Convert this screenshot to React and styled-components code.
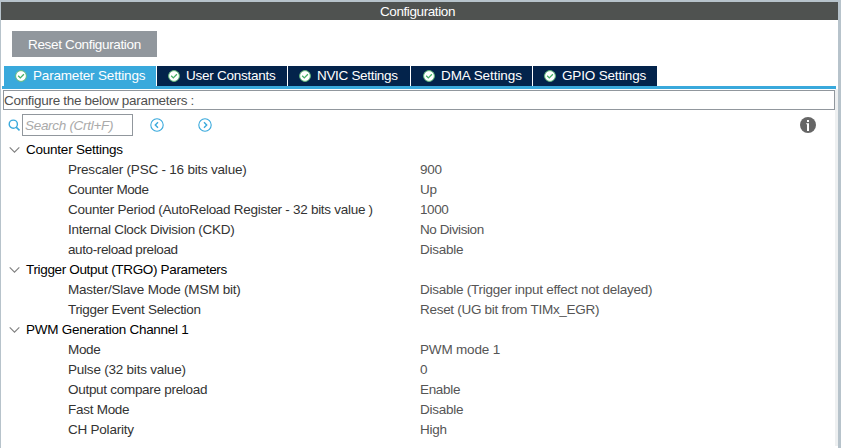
import React from "react";
import styled, { createGlobalStyle } from "styled-components";

const GlobalStyle = createGlobalStyle`
  *, *::before, *::after { box-sizing: border-box; }
  body { margin: 0; background: #fff; overflow: hidden; }
`;

const Window = styled.div`
  width: 841px;
  height: 448px;
  border: solid #b7c3cb;
  border-width: 2px 3px 0 1px;
  background: #fff;
  font: 13.5px/20px "Liberation Sans", Arial, sans-serif;
  color: #505050;
  white-space: pre;
`;

const Text = styled.span`
  letter-spacing: ${({ $ls }) => $ls || 0}px;
`;

const TitleBar = styled.header`
  height: 18px;
  line-height: 19px;
  background: #4f5250;
  color: #fff;
  text-align: center;
  padding-right: 4px;
`;

const Toolbar = styled.div`
  height: 46px;
  padding: 11px 0 0 11px;
`;

const ResetButton = styled.button`
  display: block;
  width: 145px;
  height: 26px;
  border: 0;
  padding: 1px 0 0 16px;
  background: #91979d;
  color: #fff;
  font: inherit;
  text-align: left;
  white-space: pre;
`;

const Tabs = styled.nav`
  display: flex;
  gap: 1px;
  height: 20px;
  padding-left: 3px;
`;

const Tab = styled.div`
  display: flex;
  align-items: center;
  gap: 6px;
  width: ${({ $width }) => $width}px;
  padding-left: ${({ $inset }) => $inset || 11}px;
  background: ${({ $active }) => ($active ? "#39a9dc" : "#03234b")};
  color: #fff;
`;

const TabLine = styled.div`
  height: 3px;
  width: 834px;
  margin-left: 1px;
  background: #39a9dc;
`;

const Content = styled.main`
  width: 836px;
  height: 357px;
  margin-left: 1px;
  padding: 1px 0 0 1px;
  border-right: 3px solid #eef0f1;
`;

const Description = styled.div`
  width: 832px;
  height: 20px;
  border: 1px solid #91979d;
  line-height: 19px;
`;

const SearchRow = styled.div`
  display: flex;
  align-items: center;
  height: 30px;
  padding-left: 5px;
`;

const SearchBox = styled.div`
  width: 111px;
  height: 22px;
  margin: 0 17px 0 2px;
  padding-left: 2px;
  border: 1px solid #91979d;
  color: #aaa;
  font-style: italic;
  line-height: 21px;
`;

const NavButton = styled.span`
  display: flex;
  width: 14px;
  height: 14px;
  margin-right: 34px;
`;

const InfoButton = styled.span`
  display: flex;
  margin: 0 19px 0 auto;
`;

const Group = styled.section`
  display: block;
`;

const GroupTitle = styled.h2`
  display: flex;
  align-items: center;
  gap: 6px;
  height: 20px;
  margin: 0;
  padding-left: 6px;
  font: inherit;
  color: #000;
`;

const Row = styled.div`
  display: grid;
  grid-template-columns: 352px 1fr;
  height: 20px;
  padding-left: 65px;
`;

const Name = styled(Text)`
  color: #333;
`;

const Value = styled(Text)`
  color: #555;
`;

const CheckIcon = () => (
  <svg width="12" height="12" viewBox="0 0 12 12">
    <circle cx="6" cy="6" r="5.4" fill="#fff" stroke="#61bb7b" strokeWidth="1" />
    <path d="M3.2 5.8 5.3 7.9 8.9 4.3" fill="none" stroke="#45b065" strokeWidth="1.3" />
  </svg>
);

const SearchIcon = () => (
  <svg width="12" height="12" viewBox="0 0 12 12">
    <circle cx="5.3" cy="5.2" r="4.1" fill="none" stroke="#39a9dc" strokeWidth="1.4" />
    <path d="M8.2 8.1 11.5 11.4" stroke="#39a9dc" strokeWidth="1.6" />
  </svg>
);

const ArrowIcon = ({ next }) => (
  <svg width="14" height="14" viewBox="0 0 14 14" fill="none" stroke="#39a9dc">
    <circle cx="7" cy="7" r="6.2" strokeWidth="1.1" />
    <path d={next ? "M6 4.3 8.7 7 6 9.7" : "M8 4.3 5.3 7 8 9.7"} strokeWidth="1.4" />
  </svg>
);

const InfoIcon = () => (
  <svg width="16" height="16" viewBox="0 0 16 16">
    <circle cx="8" cy="8" r="8" fill="#666" />
    <path d="M7 3h2v2H7zM6.2 6.2H9V14H7V7.2h-.8z" fill="#fff" />
  </svg>
);

const Chevron = () => (
  <svg width="11" height="9" viewBox="0 0 11 9">
    <path d="M.7 1.3 5.5 6.1 10.3 1.3" fill="none" stroke="#808080" strokeWidth="1.1" />
  </svg>
);

const tabs = [
  { label: "Parameter Settings", width: 152, ls: -0.18 },
  { label: "User Constants", width: 130, ls: -0.25 },
  { label: "NVIC Settings", width: 122, ls: -0.32 },
  { label: "DMA Settings", width: 121, ls: -0.08, inset: 12 },
  { label: "GPIO Settings", width: 124, ls: -0.17 },
];

// Each label is [text, letter spacing in px].
const groups = [
  {
    title: ["Counter Settings", -0.23],
    rows: [
      [["Prescaler (PSC - 16 bits value)", -0.22], ["900", -0.27]],
      [["Counter Mode", -0.42], ["Up", -0.3]],
      [["Counter Period (AutoReload Register - 32 bits value )", -0.28], ["1000", -0.4]],
      [["Internal Clock Division (CKD)", -0.29], ["No Division", -0.41]],
      [["auto-reload preload", -0.39], ["Disable", -0.24]],
    ],
  },
  {
    title: ["Trigger Output (TRGO) Parameters", -0.34],
    rows: [
      [["Master/Slave Mode (MSM bit)", -0.22], ["Disable (Trigger input effect not delayed)", -0.26]],
      [["Trigger Event Selection", -0.31], ["Reset (UG bit from TIMx_EGR)", -0.29]],
    ],
  },
  {
    title: ["PWM Generation Channel 1", -0.26],
    rows: [
      [["Mode", -0.35], ["PWM mode 1", -0.18]],
      [["Pulse (32 bits value)", -0.22], ["0", 0]],
      [["Output compare preload", -0.29], ["Enable", -0.33]],
      [["Fast Mode", -0.27], ["Disable", -0.24]],
      [["CH Polarity", -0.23], ["High", -0.25]],
    ],
  },
];

export default function App() {
  return (
    <Window>
      <GlobalStyle />
      <TitleBar><Text $ls={-0.4}>Configuration</Text></TitleBar>
      <Toolbar>
        <ResetButton><Text $ls={-0.34}>Reset Configuration</Text></ResetButton>
      </Toolbar>
      <Tabs>
        {tabs.map((tab, i) => (
          <Tab key={tab.label} $width={tab.width} $inset={tab.inset} $active={i === 0}>
            <CheckIcon />
            <Text $ls={tab.ls}>{tab.label}</Text>
          </Tab>
        ))}
      </Tabs>
      <TabLine />
      <Content>
        <Description><Text $ls={-0.3}>Configure the below parameters :</Text></Description>
        <SearchRow>
          <SearchIcon />
          <SearchBox><Text $ls={-0.3}>Search (Crtl+F)</Text></SearchBox>
          <NavButton><ArrowIcon /></NavButton>
          <NavButton><ArrowIcon next /></NavButton>
          <InfoButton><InfoIcon /></InfoButton>
        </SearchRow>
        {groups.map(({ title, rows }) => (
          <Group key={title[0]}>
            <GroupTitle><Chevron /><Text $ls={title[1]}>{title[0]}</Text></GroupTitle>
            {rows.map(([name, value]) => (
              <Row key={name[0]}>
                <Name $ls={name[1]}>{name[0]}</Name>
                <Value $ls={value[1]}>{value[0]}</Value>
              </Row>
            ))}
          </Group>
        ))}
      </Content>
    </Window>
  );
}
